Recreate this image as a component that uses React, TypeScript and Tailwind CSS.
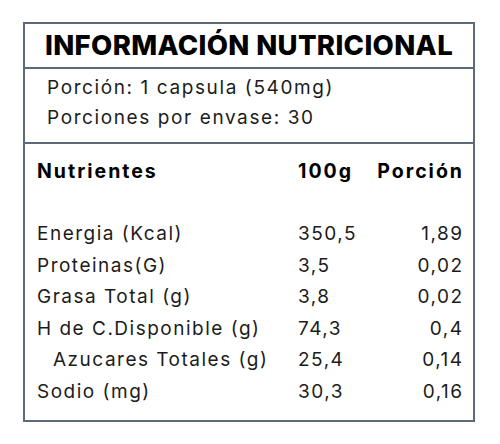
import React from "react";

const rows: [string, string, string, boolean?][] = [
  ["Energia (Kcal)", "350,5", "1,89"],
  ["Proteinas(G)", "3,5", "0,02"],
  ["Grasa Total (g)", "3,8", "0,02"],
  ["H de C.Disponible (g)", "74,3", "0,4"],
  ["Azucares Totales (g)", "25,4", "0,14", true],
  ["Sodio (mg)", "30,3", "0,16"],
];

export default function App() {
  return (
    <div className="w-[500px] h-[444px] bg-white pt-[22px] pl-[23px] font-[Inter,'Open_Sans',sans-serif]">
      <div className="w-[452px] h-[400px] border-2 border-[#5d6a78] flex flex-col text-[#1c1c1c]">
        <div className="h-[45px] flex items-center justify-center border-b-2 border-[#5d6a78]">
          <span className="text-[27.5px] font-extrabold text-black tracking-[0.35px] leading-none">
            INFORMACIÓN NUTRICIONAL
          </span>
        </div>
        <div className="h-[75px] pl-[22px] pt-[4px] border-b-2 border-[#5d6a78] text-[19px] tracking-[1.6px] leading-[30px]">
          <div>Porción: 1 capsula (540mg)</div>
          <div>Porciones por envase: 30</div>
        </div>
        <div className="pl-[12px] pr-[11px] pt-[12px] text-[19px]">
          <div className="grid grid-cols-[261px_1fr_auto] text-[19.5px] font-bold text-black leading-[31px] tracking-[2px]">
            <div>Nutrientes</div>
            <div>100g</div>
            <div className="mr-[-2px]">Porción</div>
          </div>
          <div className="mt-[31px] tracking-[1.5px]">
            {rows.map(([n, a, b, indent]) => (
              <div
                key={n}
                className="grid grid-cols-[261px_1fr_auto] leading-[31.5px]"
              >
                <div className={indent ? "pl-[16px]" : ""}>{n}</div>
                <div>{a}</div>
                <div className="text-right mr-[-1.5px]">{b}</div>
              </div>
            ))}
          </div>
        </div>
      </div>
    </div>
  );
}
